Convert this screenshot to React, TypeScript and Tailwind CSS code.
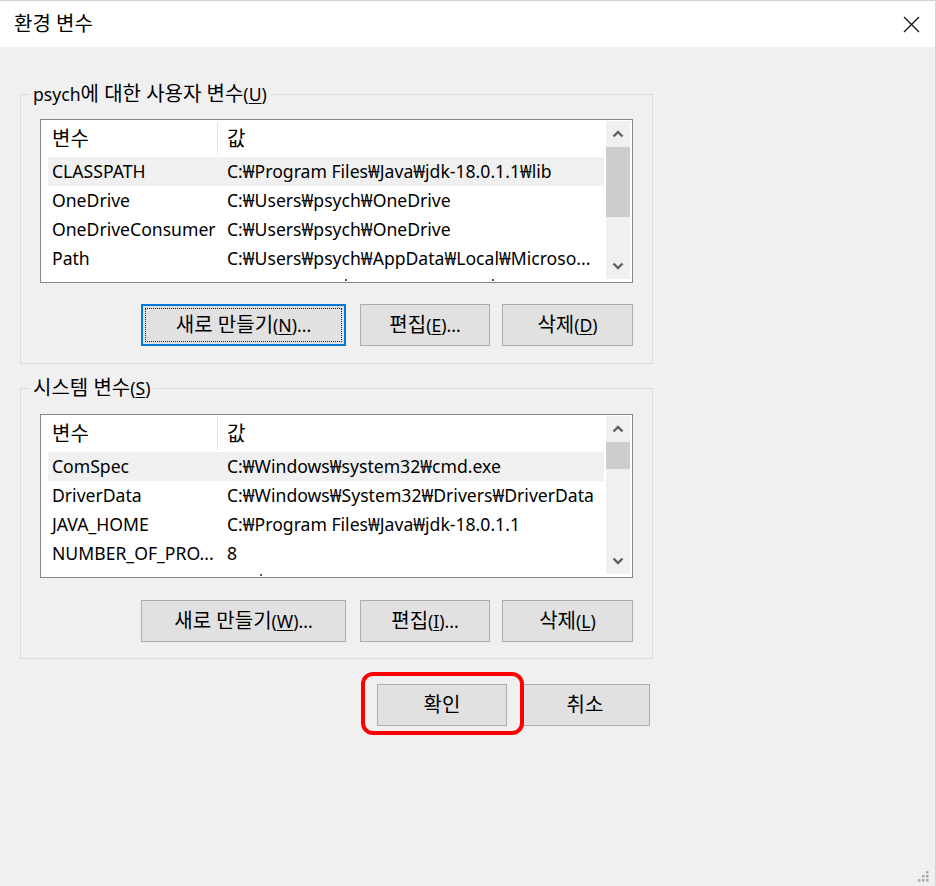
import React from 'react';

// Types
type VarRow = [string, string];

interface VarListProps {
  rows: VarRow[];
  thumbHeight: number;
  dots: number[];
}

const userVars: VarRow[] = [
  ['CLASSPATH', 'C:₩Program Files₩Java₩jdk-18.0.1.1₩lib'],
  ['OneDrive', 'C:₩Users₩psych₩OneDrive'],
  ['OneDriveConsumer', 'C:₩Users₩psych₩OneDrive'],
  ['Path', 'C:₩Users₩psych₩AppData₩Local₩Microso...'],
];

const systemVars: VarRow[] = [
  ['ComSpec', 'C:₩Windows₩system32₩cmd.exe'],
  ['DriverData', 'C:₩Windows₩System32₩Drivers₩DriverData'],
  ['JAVA_HOME', 'C:₩Program Files₩Java₩jdk-18.0.1.1'],
  ['NUMBER_OF_PRO...', '8'],
];

// Hangul renders larger than latin in the dialog font
const Ko = ({ children }: { children: React.ReactNode }) => <span className="text-[20px]">{children}</span>;

const Chevron = ({ up }: { up?: boolean }) => (
  <svg width="12" height="8" viewBox="0 0 12 8" className="text-[#606060]">
    <path
      d={up ? 'M1.5 6.5 L6 2 L10.5 6.5' : 'M1.5 1.5 L6 6 L10.5 1.5'}
      fill="none"
      stroke="currentColor"
      strokeWidth="2.4"
    />
  </svg>
);

// Mnemonic label: text(<u>K</u>)suffix
const Mnemonic = ({ text, k, suffix = '' }: { text: React.ReactNode; k: string; suffix?: string }) => (
  <span>
    {text}(<span className="underline underline-offset-2">{k}</span>){suffix}
  </span>
);

const VarList = ({ rows, thumbHeight, dots }: VarListProps) => (
  <div className="w-[593px] h-[164px] border border-[#828790] bg-white flex overflow-hidden">
    <div className="flex-1 min-w-0 flex flex-col mr-[2px] overflow-hidden">
      {/* Header */}
      <div className="h-[37px] shrink-0 flex items-center pl-[7px]">
        <div className="w-[170px] h-[33px] pl-[4px] flex items-center border-r border-[#e5e5e5]">
          <Ko>변수</Ko>
        </div>
        <div className="pl-[9px]">
          <Ko>값</Ko>
        </div>
      </div>
      {rows.map(([name, value], i) => (
        <div
          key={name}
          className={`h-[29px] shrink-0 flex items-center ml-[7px] whitespace-nowrap ${i === 0 ? 'bg-[#f0f0f0]' : ''}`}
        >
          <div className="w-[170px] pl-[4px] overflow-hidden">{name}</div>
          <div className="flex-1 pl-[9px] overflow-hidden">{value}</div>
        </div>
      ))}
      {/* Next row, mostly clipped */}
      <div className="h-[29px] shrink-0 flex items-start pt-[6px]">
        {dots.map((x, i) => (
          <span key={i} className="w-[2px] h-[2px] bg-[#555] shrink-0" style={{ marginLeft: x }} />
        ))}
      </div>
    </div>

    {/* Scrollbar */}
    <div className="w-[24px] shrink-0 mr-[2px] mt-[1px] mb-[3px] bg-[#f0f0f0] flex flex-col">
      <div className="h-[26px] flex items-center justify-center">
        <Chevron up />
      </div>
      <div className="bg-[#cdcdcd]" style={{ height: thumbHeight }} />
      <div className="flex-1" />
      <div className="h-[26px] flex items-center justify-center">
        <Chevron />
      </div>
    </div>
  </div>
);

const DlgButton = ({
  children,
  width = 'w-[130px]',
  focused = false,
}: {
  children: React.ReactNode;
  width?: string;
  focused?: boolean;
}) => (
  <button
    className={`relative ${width} h-[42px] bg-[#e1e1e1] flex items-center justify-center leading-none ${
      focused ? 'border-2 border-[#0078d7]' : 'border border-[#adadad]'
    }`}
  >
    {focused && <span className="absolute inset-[2px] border border-dotted border-[#222]" />}
    {children}
  </button>
);

const VarGroup = ({
  label,
  rows,
  thumbHeight,
  dots,
  buttons,
  listTop,
  buttonsTop,
  bottomPad,
}: {
  label: React.ReactNode;
  rows: VarRow[];
  thumbHeight: number;
  dots: number[];
  buttons: React.ReactNode;
  listTop: string;
  buttonsTop: string;
  bottomPad: string;
}) => (
  <fieldset className={`w-[631px] border border-[#dcdcdc] px-[19px] ${bottomPad}`}>
    <legend className="-ml-[10px] px-[3px] leading-[24px]">{label}</legend>
    <div className={listTop}>
      <VarList rows={rows} thumbHeight={thumbHeight} dots={dots} />
    </div>
    <div className={`${buttonsTop} flex justify-end`}>{buttons}</div>
  </fieldset>
);

export default function App() {
  return (
    <div
      className="relative w-[936px] h-[886px] bg-[#f0f0f0] text-[17.6px] text-black overflow-hidden border-r border-t border-[#d4d4d4]"
      style={{ fontFamily: '"Noto Sans", "Noto Sans CJK KR", sans-serif' }}
    >
      {/* Title bar */}
      <div className="h-[46px] bg-white flex items-center justify-between pl-[14px] pr-[1px]">
        <Ko>환경 변수</Ko>
        <div className="w-[46px] h-[46px] flex items-center justify-center">
          <svg width="17" height="17" viewBox="0 0 17 17">
            <path d="M1 1 L16 16 M16 1 L1 16" stroke="#111" strokeWidth="1.3" />
          </svg>
        </div>
      </div>

      <div className="pl-[20px]">
        <div className="mt-[35px]">
          <VarGroup
            label={
              <Mnemonic
                text={
                  <>
                    psych<Ko>에 대한 사용자 변수</Ko>
                  </>
                }
                k="U"
              />
            }
            rows={userVars}
            thumbHeight={70}
            dots={[304, 145]}
            listTop="mt-[13px]"
            buttonsTop="mt-[21px]"
            bottomPad="pb-[17px]"
            buttons={
              <div className="flex gap-[14px]">
                <DlgButton width="w-[205px]" focused>
                  <Mnemonic text={<Ko>새로 만들기</Ko>} k="N" suffix="..." />
                </DlgButton>
                <div className="flex gap-[12px]">
                  <DlgButton>
                    <Mnemonic text={<Ko>편집</Ko>} k="E" suffix="..." />
                  </DlgButton>
                  <DlgButton width="w-[131px]">
                    <Mnemonic text={<Ko>삭제</Ko>} k="D" />
                  </DlgButton>
                </div>
              </div>
            }
          />
        </div>

        <div className="mt-[12px]">
          <VarGroup
            label={<Mnemonic text={<Ko>시스템 변수</Ko>} k="S" />}
            rows={systemVars}
            thumbHeight={27}
            dots={[219]}
            listTop="mt-[14px]"
            buttonsTop="mt-[22px]"
            bottomPad="pb-[16px]"
            buttons={
              <div className="flex gap-[14px]">
                <DlgButton width="w-[205px]">
                  <Mnemonic text={<Ko>새로 만들기</Ko>} k="W" suffix="..." />
                </DlgButton>
                <div className="flex gap-[12px]">
                  <DlgButton>
                    <Mnemonic text={<Ko>편집</Ko>} k="I" suffix="..." />
                  </DlgButton>
                  <DlgButton width="w-[131px]">
                    <Mnemonic text={<Ko>삭제</Ko>} k="L" />
                  </DlgButton>
                </div>
              </div>
            }
          />
        </div>

        {/* OK / Cancel */}
        <div className="w-[631px] mt-[25px] pr-[1px] flex justify-end gap-[13px]">
          <div className="relative z-10">
            <DlgButton>
              <Ko>확인</Ko>
            </DlgButton>
            <div className="absolute -left-[16px] -top-[12px] -right-[17px] -bottom-[9px] border-4 border-[#ff0000] rounded-[12px]" />
          </div>
          <DlgButton>
            <Ko>취소</Ko>
          </DlgButton>
        </div>
      </div>

      {/* Resize grip */}
      <svg className="absolute right-[6px] bottom-[4px]" width="12" height="12" viewBox="0 0 12 12">
        {[
          [9, 1],
          [5, 5],
          [9, 5],
          [1, 9],
          [5, 9],
          [9, 9],
        ].map(([x, y], i) => (
          <rect key={i} x={x} y={y} width="2.5" height="2.5" fill="#a8a8a8" />
        ))}
      </svg>
    </div>
  );
}
